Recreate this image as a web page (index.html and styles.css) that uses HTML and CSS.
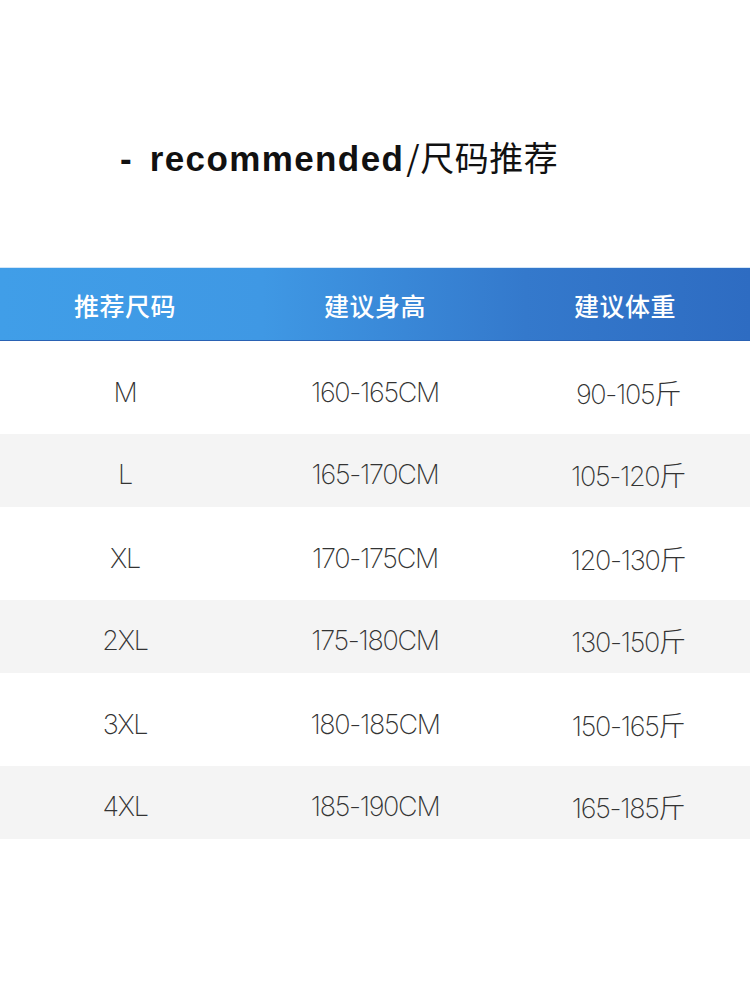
FILE: index.html
```html
<!DOCTYPE html>
<html lang="zh-CN">
<head>
<meta charset="utf-8">
<title>尺码推荐</title>
<link rel="stylesheet" href="styles.css">
</head>
<body>
<div class="page">
  <div class="title">
    <span class="dash">-</span><span class="en">recommended</span><span class="cn">/尺码推荐</span>
  </div>
  <div class="table">
    <div class="thead">
      <div class="cell">推荐尺码</div>
      <div class="cell">建议身高</div>
      <div class="cell">建议体重</div>
    </div>
    <div class="row tall">
      <div class="cell">M</div>
      <div class="cell">160-165CM</div>
      <div class="cell">90-105斤</div>
    </div>
    <div class="row short gray">
      <div class="cell">L</div>
      <div class="cell">165-170CM</div>
      <div class="cell">105-120斤</div>
    </div>
    <div class="row tall">
      <div class="cell">XL</div>
      <div class="cell">170-175CM</div>
      <div class="cell">120-130斤</div>
    </div>
    <div class="row short gray">
      <div class="cell">2XL</div>
      <div class="cell">175-180CM</div>
      <div class="cell">130-150斤</div>
    </div>
    <div class="row tall">
      <div class="cell">3XL</div>
      <div class="cell">180-185CM</div>
      <div class="cell">150-165斤</div>
    </div>
    <div class="row short gray">
      <div class="cell">4XL</div>
      <div class="cell">185-190CM</div>
      <div class="cell">165-185斤</div>
    </div>
  </div>
</div>
</body>
</html>
```

FILE: styles.css
```css
html, body {
  margin: 0;
  padding: 0;
  background: #ffffff;
}

.page {
  width: 750px;
  height: 1000px;
  background: #ffffff;
}

.title {
  height: 267px;
  box-sizing: border-box;
  padding: 137px 0 0 120px;
  display: flex;
  align-items: baseline;
  color: #111111;
}

.dash {
  font-family: "Liberation Sans", Arial, sans-serif;
  font-weight: 700;
  font-size: 35px;
  line-height: 40px;
  margin-right: 18px;
}

.en {
  font-family: "Liberation Sans", Arial, sans-serif;
  font-weight: 700;
  font-size: 35px;
  line-height: 40px;
  letter-spacing: 1.4px;
}

.cn {
  font-family: "Noto Sans CJK SC", "Liberation Sans", sans-serif;
  font-weight: 400;
  font-size: 34px;
  line-height: 40px;
  margin-left: 2px;
  letter-spacing: 0.5px;
}

.table {
  width: 750px;
}

.thead {
  display: grid;
  grid-template-columns: repeat(3, 1fr);
  align-items: center;
  height: 74px;
  box-sizing: border-box;
  border-top: 1px solid #d3e6f8;
  border-bottom: 1px solid #2a62b4;
  background: linear-gradient(90deg, #409ee8 0%, #3f98e4 35%, #3479cc 70%, #2e6cc2 100%);
  color: #ffffff;
  font-family: "Noto Sans CJK SC", sans-serif;
  font-weight: 500;
  font-size: 25px;
}

.thead .cell {
  text-align: center;
  padding-top: 2px;
  letter-spacing: 0.5px;
}

.row {
  display: grid;
  grid-template-columns: repeat(3, 1fr);
  align-items: center;
  box-sizing: border-box;
  color: #333333;
  font-family: "Inter", "Noto Sans CJK SC", sans-serif;
  font-weight: 200;
  font-size: 27px;
  letter-spacing: -1.3px;
}

.row .cell {
  text-align: center;
}

.row .cell:last-child {
  padding-left: 6px;
}

.row.tall {
  height: 93px;
  padding-top: 10px;
}

.row.short {
  height: 73px;
  padding-top: 8px;
}

.row.gray {
  background: #f4f4f4;
}
```
